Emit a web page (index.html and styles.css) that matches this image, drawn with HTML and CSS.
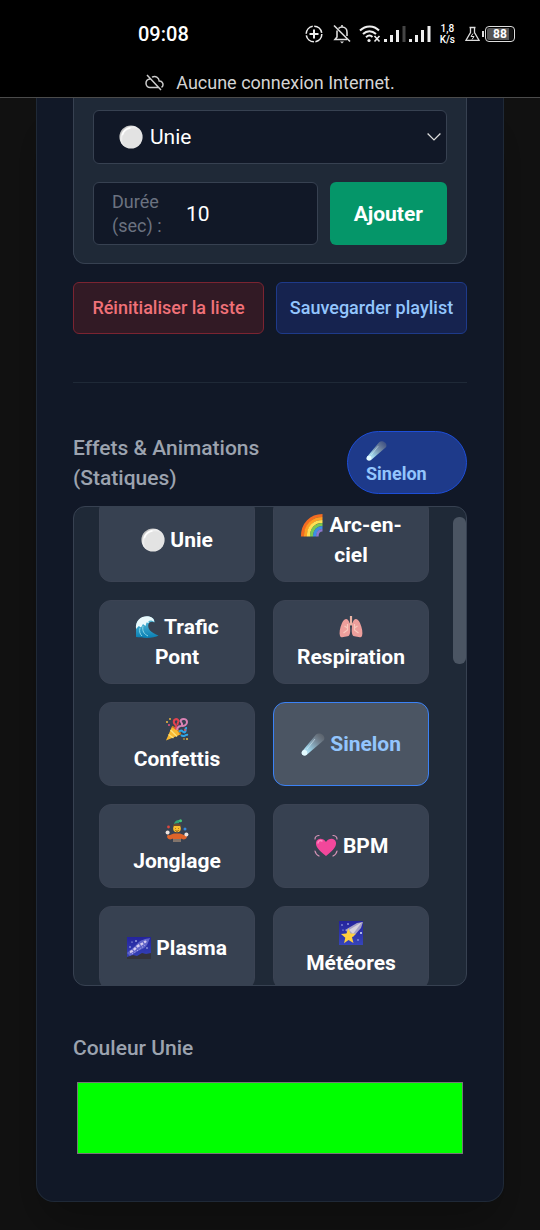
FILE: index.html
```html
<!DOCTYPE html>
<html lang="fr">
<head>
<meta charset="utf-8">
<meta name="viewport" content="width=device-width, initial-scale=1">
<title>Effets &amp; Animations</title>
<link rel="stylesheet" href="styles.css">
</head>
<body>
<svg class="sprite" aria-hidden="true">
  <defs>
    <radialGradient id="g-ball" cx=".6" cy=".6" r=".6"><stop offset=".75" stop-color="#e3e3e3"/><stop offset=".9" stop-color="#f2f2f2"/><stop offset="1" stop-color="#c4c4c4"/></radialGradient>
    <linearGradient id="g-tail" x1="0" y1="1" x2="1" y2="0"><stop offset="0" stop-color="#e8fbff"/><stop offset=".3" stop-color="#9bd0e6"/><stop offset=".65" stop-color="#8195a5" stop-opacity=".8"/><stop offset="1" stop-color="#777" stop-opacity=".25"/></linearGradient>
    <linearGradient id="g-wave" x1="0" y1="0" x2="0" y2="1"><stop offset="0" stop-color="#64c5df"/><stop offset="1" stop-color="#087fb4"/></linearGradient>
    <linearGradient id="g-sky" x1="0" y1="0" x2="0" y2="1"><stop offset="0" stop-color="#24239c"/><stop offset="1" stop-color="#3645ba"/></linearGradient>
  </defs>
  <symbol id="e-ball" viewBox="0 0 24 24"><circle cx="12" cy="12" r="11.6" fill="url(#g-ball)"/><path d="M3.5 9.500A9.500 9.500 0 0 1 11 3" fill="none" stroke="#fff" stroke-width="1.500" stroke-linecap="round"/></symbol>
  <symbol id="e-rainbow" viewBox="0 0 24 24">
    <g fill="none" stroke-width="3.200"><path d="M2.500 23.500C2.500 11 11 2.500 22.500 2.500" stroke="#f36b21"/><path d="M5.500 23.500C5.500 12.500 12.500 5.500 22.500 5.500" stroke="#ff9e22"/><path d="M8.500 23.500C8.500 14 14 8.500 22.500 8.500" stroke="#fee052"/><path d="M11.500 23.500C11.500 16 16 11.500 22.500 11.500" stroke="#7bc850"/><path d="M14.500 23.500C14.500 18 18 14.500 22.500 14.500" stroke="#3d8ee6"/><path d="M17.300 23.500C17.300 19.500 19 17.300 22.500 17.300" stroke="#8a78d0" stroke-width="2.600"/></g>
  </symbol>
  <symbol id="e-wave" viewBox="0 0 24 24"><path d="M1 22V12C1 5 7 1 13 1.500c4 .3 7 3 6.500 6-2-1.500-5-1-6 1.500-1.500 5 3 9 10 11.500-4 3-15 2.800-22.500 1.500z" fill="url(#g-wave)"/><path d="M1 14C0 5 7 .5 13 1.300c4 .5 6.500 3 6.200 5.700-1.700-1.700-4-2-5.700-.9l.3 2-2.300-.6-1 3.500-2.500-2-2 3.500-2.200-1.500z" fill="#eaf9fc"/><path d="M8 11c-1 5 1 8 5 10M5 13c-1 4 0 6 2 8" stroke="#8bd8e7" fill="none"/></symbol>
  <symbol id="e-lungs" viewBox="0 0 24 24"><path d="M12 1v8M12 8l-4 5M12 8l4 5" stroke="#e9b5a6" stroke-width="2.200" fill="none"/><path d="M10.500 8C9 2.500 5.500 2.500 3 8 .8 13 0 18 1 21c1 2.500 5 .5 7.500.3C12 21 11.500 14 10.500 8z" fill="#ed9f9c"/><path d="M13.500 8c1.500-5.500 5-5.500 7.500 0 2.200 5 3 10 2 13-1 2.500-5 .5-7.500.3C12 21 12.500 14 13.500 8z" fill="#ed9f9c"/><path d="M8.500 9v6l-4 3M8.500 13l-3-2M15.500 9v6l4 3M15.500 13l3-2" stroke="#f8cabe" stroke-width="1.200" fill="none"/></symbol>
  <symbol id="e-party" viewBox="0 0 24 24"><path d="M1 23.500 7 9.500c4 1.500 7.500 4.500 8.500 8z" fill="#f8b830"/><path d="M3.500 17.500l5 3.500M5.500 13l6.500 6.500" stroke="#fde07a" stroke-width="1.500"/><path d="M7 9.500c4 1.500 7.500 4.500 8.500 8" stroke="#c77a1f" stroke-width="1.600" fill="none"/><path d="M10 12c3-3 0-4-1-6-1-3 2-5 4-3s-2 3 0 5" fill="none" stroke="#e34250" stroke-width="2"/><path d="M12 13c1-6 4-2 5-5s-3-3-1-5 6-1 6 2-3 4-5 4" fill="none" stroke="#d982b4" stroke-width="2"/><path d="M14 15c3-4 4 2 6 0s-1-4 2-4M16 18c3 3 4-1 7 0" fill="none" stroke="#2fa5e5" stroke-width="2"/><g fill="#f4be40"><circle cx="2" cy="5" r="1"/><circle cx="5" cy="2" r=".9"/><circle cx="22" cy="22" r="1"/><circle cx="19" cy="22" r=".8"/></g><circle cx="4" cy="8" r="1" fill="#e6537d"/><circle cx="20" cy="13" r="1" fill="#e65059"/></symbol>
  <symbol id="e-comet" viewBox="0 0 24 24"><path d="M1 19.500 15 2.500C18-.5 25 3 23 8L5.500 23C2.500 24.500-.5 22.500 1 19.500z" fill="url(#g-tail)"/><circle cx="3.500" cy="20.700" r="2.700" fill="#e4faff"/><path d="M6 17 14 7" stroke="#e5f8ff" stroke-opacity=".5"/></symbol>
  <symbol id="e-juggle" viewBox="0 0 24 24"><path d="M9 5c1-4 4-4 6-4l-1 3z" fill="#32a477"/><circle cx="15.500" cy="1.800" r="1.500" fill="#45c778"/><path d="M8 6c2-2 6-2 8 0l-.5 5h-7z" fill="#6b4b30"/><circle cx="12" cy="9.500" r="3.800" fill="#fbc02d"/><path d="M9 6h6" stroke="#6b4b30" stroke-width="2"/><path d="M10.500 9.500h.5M13.500 9.500h.5M10.500 11.500c1 1 2 1 3 0" stroke="#6b3f22" fill="none"/><path d="M3 15c1 3 3 0 6-.5h6c3 .5 5 3.500 6 .5l1 3c-2 4-5 2-6 1.500V21H8v-1.500c-1 .5-4 2.500-6-1.500z" fill="#df6429"/><path d="M8 20h8v3H8z" fill="#82746b"/><circle cx="2.600" cy="13.500" r="2" fill="#eee4df"/><circle cx="21.400" cy="15.500" r="2" fill="#eee4df"/><circle cx="3.500" cy="8" r="1.400" fill="#dc473f"/><circle cx="20" cy="10" r="1.500" fill="#3686dc"/></symbol>
  <symbol id="e-heart" viewBox="0 0 24 24"><path d="M12 22C4 16 1.500 12 2 8.500 2.800 4 9 3.500 12 8c3-4.500 9.200-4 10 .5.500 3.500-2 7.500-10 13.500z" fill="#f2479b"/><path d="M4 9c0-2 2-3 4-2" stroke="#ff8bc3" fill="none" stroke-width="1.500" stroke-linecap="round"/><path d="M1 5c0-2 2-3.500 4-3.500M23 5c0-2-2-3.500-4-3.500M1 17c.5 2.500 2 4 4 5M23 17c-.5 2.500-2 4-4 5" stroke="#d995b9" fill="none" stroke-width="1.200" stroke-linecap="round"/></symbol>
  <symbol id="e-galaxy" viewBox="0 0 24 24"><path d="M0 1h24v22H0z" fill="url(#g-sky)"/><path d="M0 17C4 13 7 12 10 8s8-5 13-6c-2 5-3 9-8 11S7 18 3 20z" fill="#6064c8"/><path d="M3 16c4-1 5-4 8-6s5-2 8-5" stroke="#d3c9ee" stroke-width="2.400" stroke-dasharray="3 1.300" fill="none"/><path d="M5 18l8-5 5-4" stroke="#b7b6f4" stroke-dasharray="1 2" fill="none"/><path d="M0 23v-2l6-2 4 1 5-3 4 1 5-1v6z" fill="#33333b"/><g fill="#dfe8ff"><circle cx="3" cy="11" r=".7"/><circle cx="9" cy="5" r=".8"/><circle cx="5" cy="6" r=".6"/><circle cx="20" cy="12" r=".7"/></g></symbol>
  <symbol id="e-star" viewBox="0 0 24 24"><path d="M0 0h24v24H0z" fill="url(#g-sky)"/><path d="M6 9 18 2l6-1-2 6-8 9z" fill="#bbb5cd" opacity=".85"/><path d="M10 9 23 1 14 13z" fill="#ede7e4" opacity=".7"/><path d="M9.500 7.500l2 5 5.500.2-4 3.600 1.500 5.700-5-3-4.500 3.300 1.300-5.600L2 13l5.400-.6z" fill="#ffd13e"/><g fill="#d6dfff"><circle cx="3" cy="4" r=".7"/><circle cx="9" cy="3" r=".8"/><circle cx="4" cy="9" r=".6"/><circle cx="22" cy="12" r="1"/><circle cx="19" cy="19" r=".7"/></g></symbol>
</svg>

<header class="status">
  <div class="status-row">
    <time class="clock">09:08</time>
    <div class="indicators" aria-hidden="true">
      <svg width="18" height="18" viewBox="0 0 18 18" fill="none" stroke="#eee" stroke-width="1.600"><circle cx="9" cy="9" r="7.800" stroke-dasharray="10.700 1.550"/><path d="M9 4.500v9M4.500 9h9" stroke-width="2"/></svg>
      <svg class="bell" width="18" height="20" viewBox="0 0 18 20" fill="none" stroke="#ddd" stroke-width="1.600"><path d="M5.500 4.500C6.500 3.500 7.600 3 9 3c3.200 0 5 2.300 5 5v4M4 6.500V13l-2 2.500h12M9 1v2M1 1.500l16 16"/><path d="M7 17.500h4l-2 2z" fill="#ddd" stroke="none"/></svg>
      <svg class="wifi" width="22" height="18" viewBox="0 0 22 18" fill="none" stroke="#eee" stroke-width="2"><path d="M1 5.500c5.500-5.500 14-5.500 19 0M4 9c3.800-3.800 9-3.800 13 0M7 12.200c2.200-2 4.600-2 6.500-.3"/><circle cx="10" cy="15.500" r="1.600" fill="#eee" stroke="none"/><path d="M15.500 11l5 5.500M20.500 11l-5 5.500" stroke-width="1.600"/></svg>
      <svg width="22" height="18" viewBox="0 0 22 18" fill="#eee"><path d="M0 14h3v3H0zM6 10h3v7H6zM12 5h3v12h-3z"/><path d="M18.500 1h3v16h-3z" fill="#444"/></svg>
      <svg class="signal" width="22" height="18" viewBox="0 0 22 18" fill="#eee"><path d="M0 14h3v3H0zM6 10h3v7H6zM12 5h3v12h-3zM18.500 1h3v16h-3z"/></svg>
      <span class="speed"><span>1,8</span><span>K/s</span></span>
      <svg class="flask" width="15" height="16" viewBox="0 0 15 16" fill="none" stroke="#ddd" stroke-width="1.300"><path d="M4.500 1.500h6M5.500 1.500v5L1 14.300h13L9.500 6.500v-5"/><path d="M8 7.500l-2 3h3l-2 3" stroke-width="1"/></svg>
      <span class="battery"><span class="battery-body">88</span></span>
    </div>
  </div>
  <div class="offline">
    <svg width="19" height="17" viewBox="0 0 19 17" fill="none" stroke="#ccc" stroke-width="1.500" aria-hidden="true"><path d="M7 3.200c3.500-2 6.800.3 7.200 3.800 2.500 0 4 1.700 3.800 4-.1 1-.6 1.800-1.500 2.400M5.200 5C2.500 5.200 1 7 1 9.300 1 12 3 13.500 5 13.500h8.500M2 1l14 15"/></svg>
    <span>Aucune connexion Internet.</span>
  </div>
</header>

<main class="panel">
  <section class="composer">
    <div class="select-wrap">
      <select class="effect-select" aria-label="Effet"><option>Unie</option></select>
      <svg class="emoji select-icon" aria-hidden="true"><use href="#e-ball"/></svg>
      <svg class="chevron" viewBox="0 0 12 8" fill="none" stroke="#ddd" stroke-width="1.100" aria-hidden="true"><path d="M.5 1 6 6.500 11.500 1"/></svg>
    </div>
    <div class="add-row">
      <div class="duration">
        <label for="duration">Durée (sec) :</label>
        <input id="duration" type="text" inputmode="numeric" value="10">
      </div>
      <button class="add" type="button">Ajouter</button>
    </div>
  </section>

  <div class="actions">
    <button class="action reset" type="button">Réinitialiser la liste</button>
    <button class="action save" type="button">Sauvegarder playlist</button>
  </div>

  <hr class="divider">

  <div class="section-head">
    <h2 class="title">Effets &amp; Animations (Statiques)</h2>
    <span class="pill"><svg class="emoji" aria-hidden="true"><use href="#e-comet"/></svg> Sinelon</span>
  </div>

  <div class="effects">
    <div class="effect-grid">
      <button class="effect" type="button"><span><svg class="emoji"><use href="#e-ball"/></svg> Unie</span></button>
      <button class="effect" type="button"><span><svg class="emoji"><use href="#e-rainbow"/></svg> Arc-en-ciel</span></button>
      <button class="effect" type="button"><span><svg class="emoji"><use href="#e-wave"/></svg> Trafic Pont</span></button>
      <button class="effect" type="button"><span><svg class="emoji"><use href="#e-lungs"/></svg> Respiration</span></button>
      <button class="effect" type="button"><span><svg class="emoji"><use href="#e-party"/></svg> Confettis</span></button>
      <button class="effect active" type="button" aria-pressed="true"><span><svg class="emoji"><use href="#e-comet"/></svg> Sinelon</span></button>
      <button class="effect" type="button"><span><svg class="emoji"><use href="#e-juggle"/></svg> Jonglage</span></button>
      <button class="effect" type="button"><span><svg class="emoji"><use href="#e-heart"/></svg> BPM</span></button>
      <button class="effect" type="button"><span><svg class="emoji"><use href="#e-galaxy"/></svg> Plasma</span></button>
      <button class="effect" type="button"><span><svg class="emoji"><use href="#e-star"/></svg> Météores</span></button>
    </div>
    <div class="scroll-thumb"></div>
  </div>

  <div class="color-field">
    <label class="title" for="color">Couleur Unie</label>
    <input class="color" id="color" type="color" value="#00ff00">
  </div>
</main>
</body>
</html>
```
FILE: styles.css
```css
* {
  box-sizing: border-box;
}

body {
  margin: 0;
  background: #121212;
  color: #fff;
  font: 21px/30px Roboto, "Noto Sans", sans-serif;
}

button,
input,
select {
  font: inherit;
  color: inherit;
}

svg {
  flex: none;
}

.sprite {
  position: absolute;
  width: 0;
  height: 0;
}

/* Device status bar */
.status {
  position: relative;
  background: #000;
  border-bottom: 1px solid #4b4b4b;
  padding-top: 18px;
}

.status-row {
  display: flex;
  align-items: center;
  justify-content: space-between;
  height: 32px;
  padding: 0 25px 0 138px;
}

.clock {
  font-size: 20px;
  font-weight: 500;
}

.indicators {
  display: flex;
  align-items: center;
}

.bell {
  margin-left: 10px;
}

.wifi {
  margin: 0 3px 0 8px;
}

.signal {
  margin-left: 3px;
}

.speed {
  display: flex;
  flex-direction: column;
  align-items: center;
  margin: 0 10px 0 9px;
  font-size: 10px;
  font-weight: 500;
  line-height: 11px;
}

.flask {
  margin-right: 2px;
}

.battery {
  display: flex;
  align-items: center;
}

.battery::before {
  content: "";
  width: 2px;
  height: 6px;
  margin-right: 1px;
  background: #ddd;
}

.battery-body {
  width: 30px;
  height: 16px;
  border: 1px solid #ddd;
  border-radius: 4px;
  background: linear-gradient(90deg, #555 86%, #111 86%) content-box;
  padding: 1px;
  font-size: 12px;
  font-weight: 700;
  line-height: 12px;
  text-align: center;
}

.offline {
  display: flex;
  align-items: center;
  justify-content: center;
  gap: 12px;
  margin-top: 18px;
  color: #d4d4d4;
  font-size: 18px;
  line-height: 29px;
}

/* Main panel */
.panel {
  margin: 0 36px 29px;
  padding: 0 36px 36px;
  border: 1px solid #1f2937;
  border-top: 0;
  border-radius: 0 0 18px 18px;
  background: #111827;
  box-shadow: 0 24px 48px rgba(0, 0, 0, 0.25);
}

.emoji {
  width: 24px;
  height: 24px;
  vertical-align: -5px;
}

.composer {
  padding: 12px 19px 18px;
  border: 1px solid #374151;
  border-width: 0 1px 1px;
  border-radius: 0 0 12px 12px;
  background: #1f2937;
}

.select-wrap {
  position: relative;
}

.effect-select {
  display: block;
  width: 100%;
  height: 54px;
  padding: 0 32px 0 56px;
  border: 1px solid #374151;
  border-radius: 6px;
  background: #111827;
  appearance: none;
}

.select-icon {
  position: absolute;
  left: 26px;
  top: 15px;
}

.chevron {
  position: absolute;
  right: 6px;
  top: 22px;
  width: 14px;
  height: 10px;
}

.add-row {
  display: flex;
  gap: 12px;
  margin-top: 18px;
}

.duration {
  display: flex;
  flex: 1;
  align-items: center;
  gap: 18px;
  min-width: 0;
  height: 63px;
  padding: 0 18px;
  border: 1px solid #374151;
  border-radius: 6px;
  background: #111827;
}

.duration label {
  flex: 0 0 56px;
  color: #6b7280;
  font-size: 18px;
  line-height: 24px;
}

.duration input {
  flex: 1;
  min-width: 0;
  padding: 0;
  border: 0;
  background: none;
}

.add {
  padding: 0 24px;
  border: 0;
  border-radius: 6px;
  background: #059669;
  font-weight: 700;
}

.actions {
  display: flex;
  gap: 12px;
  margin-top: 18px;
}

.action {
  flex: 1;
  height: 52px;
  padding: 0;
  border: 1px solid;
  border-radius: 6px;
  font-size: 18px;
  font-weight: 500;
  white-space: nowrap;
}

.reset {
  border-color: #7b2431;
  background: #321a25;
  color: #f07178;
}

.save {
  border-color: #1e3a8a;
  background: #16234f;
  color: #93c5fd;
}

.divider {
  height: 1px;
  margin: 48px 0;
  border: 0;
  background: #1f2937;
}

.section-head {
  display: flex;
  align-items: center;
  justify-content: space-between;
  gap: 12px;
}

.title {
  margin: 0;
  color: #9ca3af;
  font-size: 21px;
  font-weight: 500;
  line-height: 30px;
}

.pill {
  flex: 0 0 120px;
  padding: 6px 18px 7px;
  border: 1px solid #1d4ed8;
  border-radius: 32px;
  background: #1e3a8a;
  color: #93c5fd;
  font-size: 18px;
  font-weight: 700;
  line-height: 24px;
}

.pill .emoji {
  width: 21px;
  height: 21px;
}

/* Scrollable effect list */
.effects {
  display: flex;
  gap: 24px;
  height: 480px;
  margin-top: 12px;
  padding-left: 25px;
  border: 1px solid #374151;
  border-radius: 12px;
  background: #1f2937;
  overflow: hidden;
}

.effect-grid {
  display: grid;
  flex: 1;
  grid-template-columns: 1fr 1fr;
  grid-auto-rows: 84px;
  gap: 18px;
  margin-top: -9px;
}

.effect {
  min-width: 0;
  padding: 0 22px;
  border: 1px solid #3b4353;
  border-radius: 12px;
  background: #374151;
  font-weight: 700;
}

.effect.active {
  border-color: #3b82f6;
  background: #4b5563;
  color: #93c5fd;
}

.scroll-thumb {
  width: 13px;
  height: 147px;
  margin-top: 10px;
  border-radius: 6px;
  background: #4b5563;
}

.color-field {
  margin-top: 47px;
}

.color-field label {
  display: block;
}

.color {
  display: block;
  width: 100%;
  height: 90px;
  margin-top: 12px;
  padding: 7px 4px 11px;
  border: 0;
  background: none;
  appearance: none;
}

.color::-webkit-color-swatch-wrapper {
  padding: 0;
}

.color::-webkit-color-swatch {
  border: 1px solid #777;
  border-radius: 0;
}
```
